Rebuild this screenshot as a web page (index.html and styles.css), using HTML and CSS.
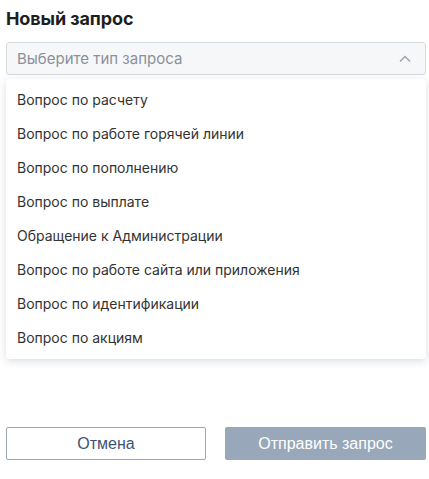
FILE: index.html
```html
<!DOCTYPE html>
<html lang="ru">
<head>
<meta charset="utf-8">
<link rel="stylesheet" href="styles.css">
</head>
<body>
<div class="page">
  <h1 class="title">Новый запрос</h1>
  <div class="select-wrap">
    <div class="select">
      <span class="placeholder">Выберите тип запроса</span>
      <svg class="chev" width="12" height="8" viewBox="0 0 12 8"><path d="M1 6.5 L6 1.5 L11 6.5" fill="none" stroke="#9aa1ab" stroke-width="1.3"/></svg>
    </div>
    <ul class="menu">
      <li>Вопрос по расчету</li>
      <li>Вопрос по работе горячей линии</li>
      <li>Вопрос по пополнению</li>
      <li>Вопрос по выплате</li>
      <li>Обращение к Администрации</li>
      <li>Вопрос по работе сайта или приложения</li>
      <li>Вопрос по идентификации</li>
      <li>Вопрос по акциям</li>
    </ul>
  </div>
  <div class="actions">
    <button class="btn btn-cancel">Отмена</button>
    <button class="btn btn-send">Отправить запрос</button>
  </div>
</div>
</body>
</html>
```
FILE: styles.css
```css
* { box-sizing: border-box; }
html, body { margin: 0; padding: 0; background: #fff; }
body { font-family: Inter, "Noto Sans", sans-serif; color: #222; }
.page { padding: 8px 3px 0 6px; width: 429px; }
.title { margin: 0; font-size: 18px; font-weight: 700; line-height: 22px; color: #1e1e1e; letter-spacing: -0.1px; }
.select-wrap { margin-top: 12px; }
.select {
  height: 33px; border: 1px solid #d6dadf; border-radius: 3px; background: #f6f7f9;
  display: flex; align-items: center; justify-content: space-between; padding: 0 14px 0 10px;
}
.placeholder { font-size: 15px; color: #8b9099; }
.chev { display: block; }
.menu {
  list-style: none; margin: 4px 0 0; padding: 4px 0; background: #fff; border-radius: 3px;
  box-shadow: 0 2px 8px rgba(40, 60, 90, 0.18);
}
.menu li { height: 34px; line-height: 34px; padding-left: 11px; font-size: 14px; color: #333; }
.actions { margin-top: 68px; display: grid; grid-template-columns: 200px 201px; column-gap: 19px; }
.btn { height: 33px; border-radius: 2px; font-family: "Liberation Sans", Arial, sans-serif; font-size: 16px; }
.btn-cancel { background: #fff; border: 1px solid #9aa7b6; color: #3e5273; }
.btn-send { background: #98a8ba; border: none; color: #fff; }
```
